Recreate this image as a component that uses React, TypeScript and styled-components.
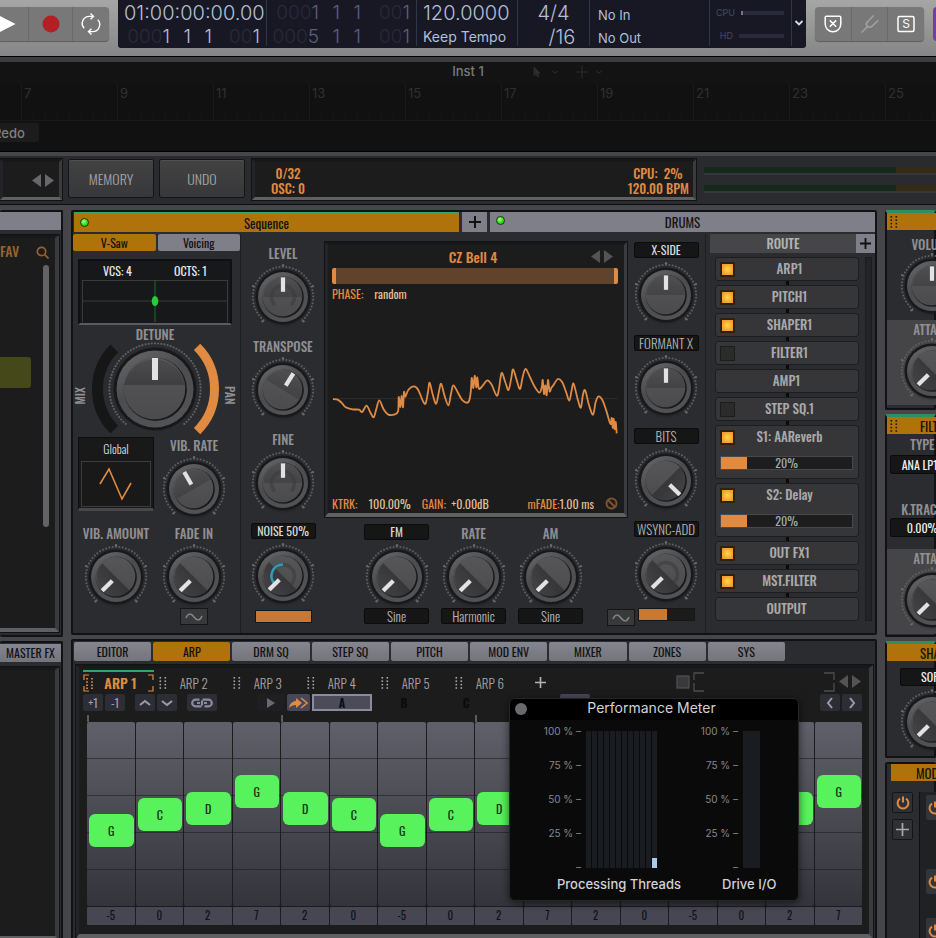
import React from 'react';
import styled, { createGlobalStyle, css } from 'styled-components';

/* ---------- tokens ---------- */

const cond = `Oswald, "Roboto Condensed", sans-serif`;
const ui = `Inter, Roboto, sans-serif`;
const orange = '#e08a42';
const amber = '#b0730b';
const lilac = '#7f7f89';

const Global = createGlobalStyle`
  * { box-sizing: border-box; }
  html, body { margin: 0; padding: 0; background: #45454a; }
  body { font-family: ${cond}; color: #a3a3a5; overflow: hidden; }
  button { font: inherit; color: inherit; border: 0; padding: 0; margin: 0; background: none; cursor: pointer; }
  svg { display: block; flex: none; }
`;

const Page = styled.div`
  position: relative;
  min-height: 100vh;
  display: flex;
  flex-direction: column;
  overflow: hidden;
`;

/* ---------- transport bar ---------- */

const TopBar = styled.header`
  display: flex;
  align-items: flex-start;
  height: 57px;
  overflow: hidden;
  background: linear-gradient(#a6a6a6, #868686);
  border-bottom: 1px solid #000;
`;

const ButtonGroup = styled.div<{ $left?: boolean }>`
  display: flex;
  flex: none;
  height: 34px;
  margin-top: 7px;
  background: #787878;
  border-radius: ${p => (p.$left ? '0 4px 4px 0' : '4px')};
  box-shadow: 0 1px 1px #5d5d5d;
  color: #fff;
`;

const GroupButton = styled.button<{ $w: number }>`
  display: flex;
  align-items: center;
  justify-content: center;
  width: ${p => p.$w}px;
  border-right: 1px solid #6a6a6a;
  &:last-child { border-right: 0; }
`;

const PlayButton = styled(GroupButton)`
  justify-content: flex-start;
`;

const PurpleButton = styled.button`
  flex: none;
  width: 40px;
  height: 34px;
  margin: 7px -37px 0 9px;
  background: #6e3db0;
  border-radius: 4px;
`;

const Lcd = styled.div`
  display: flex;
  flex: 1;
  height: 48px;
  margin: 0 9px;
  background: #181825;
  border-radius: 0 0 3px 3px;
  font-family: ${ui};
  color: #b4bfd8;
`;

const LcdCell = styled.div<{ $w?: number; $align?: string; $top?: number }>`
  ${p => (p.$w ? `width: ${p.$w}px; flex: none;` : 'flex: 1;')}
  display: flex;
  flex-direction: column;
  align-items: ${p => p.$align || 'stretch'};
  padding: ${p => p.$top || 1}px 6px 0;
  margin-bottom: 2px;
  border-right: 1px solid #30364a;
  &:last-child { border-right: 0; padding: 0; justify-content: center; align-items: center; }
`;

const Big = styled.div`
  font-size: 20px;
  font-weight: 300;
  line-height: 24px;
  white-space: nowrap;
`;

const Mid = styled.div`
  font-size: 14px;
  line-height: 24px;
  white-space: nowrap;
`;

const Small = styled.div`
  font-size: 13px;
  line-height: 23px;
  padding: 0 2px;
`;

const Position = styled.div<{ $dim?: boolean }>`
  display: grid;
  grid-template-columns: 46px 21px 21px 1fr;
  justify-items: end;
  font-size: 19px;
  font-weight: 300;
  line-height: 24px;
  color: ${p => (p.$dim ? '#5a6078' : '#b4bfd8')};
  i { font-style: normal; color: #282938; }
`;

const LoadRow = styled.div`
  display: flex;
  align-items: center;
  justify-content: flex-end;
  gap: 6px;
  padding-right: 1px;
  line-height: 23px;
  font-size: 9px;
  color: #454b5f;
`;

const LoadTrack = styled.span<{ $on?: boolean }>`
  width: 45px;
  height: 4px;
  background: #272a3c;
  border-left: 2px solid ${p => (p.$on ? '#6f7690' : '#272a3c')};
`;

/* ---------- dimmed plug-in window header ---------- */

const WindowHead = styled.div`
  display: grid;
  grid-template-columns: 1fr auto 1fr;
  align-items: start;
  height: 27px;
  background: #131313;
  border-top: 5px solid #3c3c3e;
  font: 500 13px/18px ${ui};
  color: #7b7b7d;
`;

const ToolIcons = styled.div`
  display: flex;
  gap: 16px;
  padding: 4px 0 0 47px;
`;

const Ruler = styled.div`
  display: flex;
  height: 37px;
  padding-left: 21px;
  background: #111;
  border-bottom: 1px solid #191919;
  overflow: hidden;
`;

const RulerMark = styled.span`
  flex: 0 0 96px;
  height: 100%;
  padding-left: 2px;
  border-left: 1px solid #1a1a1a;
  background: repeating-linear-gradient(90deg, transparent 0 11px, #151515 11px 12px) 0 24px / 100% 13px no-repeat;
  font: 400 13px/19px ${ui};
  color: #303031;
`;

const RedoStrip = styled.div`
  height: 31px;
  padding-top: 2px;
  background: #111;
  border-bottom: 1px solid #000;
`;

const RedoButton = styled.button`
  display: block;
  height: 19px;
  width: 51px;
  margin-left: -12px;
  padding-left: 5px;
  text-align: left;
  background: #1c1c1d;
  border-radius: 2px;
  font: 500 13px/18px ${ui};
  color: #808082;
`;

/* ---------- synth header ---------- */

const SynthHead = styled.div`
  display: flex;
  align-items: flex-start;
  height: 53px;
  padding-top: 3px;
  background: #2a2b2e;
  border-top: 4px solid #464648;
  border-bottom: 1px solid #0e0e10;
`;

const Screen = styled.div`
  background: #1c1c1d;
  border: 3px solid;
  border-color: #17181a #3b3b3e #606063 #232427;
  box-shadow: 0 0 0 1px #111214;
`;

const Slot = styled(Screen)`
  display: flex;
  align-items: center;
  justify-content: flex-end;
  width: 62px;
  height: 41px;
  padding: 3px 4px 0 0;
`;

const HeadButton = styled.button`
  width: 84px;
  height: 37px;
  margin: 1px 0 0 7px;
  background: linear-gradient(#424243, #38383a);
  box-shadow: 0 0 0 1px #141416, inset 0 1px 0 #505052;
  border-radius: 2px;
  font-size: 14px;
  font-weight: 300;
  line-height: 36px;
  color: #a5a5a7;
`;

const Info = styled(Screen)`
  flex: 1;
  display: flex;
  justify-content: space-between;
  height: 41px;
  margin: 0 8px;
  padding: 4px 4px 0 16px;
  font-size: 13px;
  font-weight: 500;
  line-height: 15px;
  color: ${orange};
  white-space: pre;
`;

const InfoLines = styled.div<{ $end?: boolean }>`
  display: flex;
  flex-direction: column;
  align-items: ${p => (p.$end ? 'flex-end' : 'center')};
`;

const Meters = styled.div`
  width: 232px;
  display: grid;
  gap: 10px;
  padding-top: 8px;
`;

const MeterBar = styled.div`
  height: 8px;
  background: linear-gradient(90deg, #14281c 0 192px, #352c18 192px);
  border-bottom: 2px solid #35373a;
`;

/* ---------- panels ---------- */

const Main = styled.main`
  flex: 1;
  display: grid;
  grid-template-columns: 63px minmax(0, 1fr) 51px;
  gap: 8px;
  background: #45454a;
  padding-top: 5px;
`;

const Column = styled.div`
  display: flex;
  flex-direction: column;
  gap: 4px;
  min-width: 0;
  overflow: hidden;
`;

const Panel = styled.section<{ $grow?: boolean }>`
  background: #2b2c2f;
  border: 2px solid #111216;
  border-radius: 2px;
  ${p => p.$grow && 'flex: 1;'}
`;

const LeftPanel = styled(Panel)`
  border-left: 0;
  display: flex;
  flex-direction: column;
`;

const LilacStrip = styled.div`
  height: 18px;
  margin-bottom: 5px;
  background: ${lilac};
`;

const BrowserScreen = styled(Screen)`
  flex: 1;
  display: flex;
  justify-content: space-between;
  border-left: 0;
  margin: 0 2px 3px 0;
  border-width: 3px 4px 4px 0;
`;

const Fav = styled.div`
  padding-top: 3px;
  font-size: 14px;
  font-weight: 500;
  line-height: 20px;
  color: #96602c;
`;

const Chip = styled.div`
  width: 31px;
  height: 31px;
  margin-top: 96px;
  background: #454919;
  border-radius: 0 3px 3px 0;
`;

const ScrollSide = styled.div`
  display: flex;
  flex-direction: column;
  align-items: flex-end;
  gap: 6px;
  padding: 8px 6px 101px 0;
`;

const Thumb = styled.div`
  width: 6px;
  height: 262px;
  background: #636365;
  border-radius: 3px;
`;

const MasterTab = styled.button`
  height: 18px;
  margin: 1px 0 5px;
  background: linear-gradient(#85858f, #74747d);
  font-size: 12px;
  line-height: 18px;
  color: #111;
  white-space: nowrap;
`;

/* ---------- oscillator ---------- */

const TabRow = styled.div`
  display: flex;
  gap: 3px;
  height: 22px;
  padding: 0 0 2px 1px;
`;

const OscTab = styled.button<{ $on?: boolean; $small?: boolean }>`
  position: relative;
  flex: ${p => (p.$small ? '0 0 25px' : '1')};
  display: flex;
  align-items: center;
  justify-content: center;
  background: ${p => (p.$on ? amber : lilac)};
  ${p => p.$on && 'border-top: 2px solid #34a36c;'}
  color: #111;
  font-size: 13px;
  line-height: 16px;
`;

const Led = styled.span`
  position: absolute;
  left: 6px;
  top: 4px;
  width: 9px;
  height: 9px;
  border-radius: 50%;
  background: radial-gradient(circle at 40% 35%, #a9ff7d, #26d80a 60%);
  border: 1px solid #123f0c;
`;

const OscBody = styled.div`
  display: grid;
  grid-template-columns: 168px 84px minmax(0, 1fr) 79px 169px;
  min-height: 399px;
`;

const Section = styled.div<{ $line?: boolean; $pad?: number }>`
  display: flex;
  flex-direction: column;
  align-items: center;
  min-width: 0;
  padding-top: ${p => p.$pad || 0}px;
  ${p => p.$line && 'border-right: 1px solid #1d1e20;'}
`;

const VoiceSection = styled(Section)`
  padding-right: 3px;
`;

const SubTabs = styled.div`
  display: flex;
  gap: 2px;
  align-self: stretch;
  margin-right: -3px;
`;

const SubTab = styled.button<{ $on?: boolean }>`
  flex: 1;
  height: 17px;
  background: ${p => (p.$on ? amber : lilac)};
  border-radius: 2px;
  color: #111;
  font-size: 12px;
  line-height: 16px;
`;

const VoiceScreen = styled.div`
  width: 154px;
  height: 66px;
  margin-top: 8px;
  padding: 0 2px;
  background: #171819;
  border: 2px solid #0f1011;
  border-bottom-color: #5b5b5e;
  border-radius: 2px;
`;

const VoiceText = styled.div`
  display: flex;
  justify-content: space-around;
  font-size: 12px;
  line-height: 19px;
  color: #e8e8ea;
`;

const Label = styled.div<{ $h?: number }>`
  height: ${p => p.$h || 20}px;
  font-size: 13px;
  font-weight: 500;
  line-height: 18px;
  color: #8f8f92;
  white-space: nowrap;
`;

const BoxButton = styled.button<{ $dim?: boolean }>`
  width: 65px;
  height: 16px;
  background: #161617;
  border: 1px solid #0b0b0c;
  border-radius: 2px;
  font-size: ${p => (p.$dim ? 13 : 12)}px;
  font-weight: ${p => (p.$dim ? 300 : 400)};
  line-height: 14px;
  color: ${p => (p.$dim ? '#b6b6b9' : '#d8d8da')};
  white-space: nowrap;
`;

const Cell = styled.div<{ $w?: number }>`
  display: flex;
  flex-direction: column;
  align-items: center;
  width: ${p => p.$w || 78}px;
  ${BoxButton}:first-child { margin-bottom: 4px; }
  ${BoxButton}:last-child { margin-bottom: 2px; }
`;

const Stack = styled.div<{ $gap: number }>`
  display: flex;
  flex-direction: column;
  gap: ${p => p.$gap}px;
`;

const BigKnobRow = styled.div`
  display: flex;
  align-items: center;
  justify-content: center;
  gap: 2px;
  height: 95px;
`;

const Side = styled.span<{ $flip?: boolean }>`
  writing-mode: vertical-rl;
  ${p => p.$flip && 'rotate: 180deg;'}
  font-size: 12px;
  font-weight: 500;
  line-height: 14px;
  color: #8f8f92;
  padding-top: ${p => (p.$flip ? 0 : 14)}px;
  padding-bottom: ${p => (p.$flip ? 14 : 0)}px;
`;

const TwoUp = styled.div`
  display: flex;
  align-items: flex-start;
`;

const GlobalBox = styled.button`
  width: 76px;
  height: 74px;
  margin: 1px 1px 13px;
  padding: 0 2px;
  background: #19191a;
  border: 1px solid #0d0d0e;
  border-bottom: 3px solid #48484b;
  font-size: 12px;
  font-weight: 300;
  line-height: 20px;
  color: #d8d8da;
  svg { border: 1px solid #3d3d40; width: 100%; margin-top: 2px; }
`;

const WaveToggle = styled.button`
  display: grid;
  place-items: center;
  width: 28px;
  height: 17px;
  background: #38393b;
  border: 1px solid #161618;
`;

const Fill = styled.div<{ $pct: number }>`
  width: 57px;
  height: 13px;
  margin-top: 3px;
  border: 1px solid #161618;
  background: linear-gradient(90deg, #c87833 ${p => p.$pct}%, #1b1b1c ${p => p.$pct}%);
`;

const Display = styled(Screen)`
  align-self: stretch;
  height: 275px;
  padding: 0 6px 0 4px;
  display: flex;
  flex-direction: column;
  border-width: 3px 3px 4px 3px;
`;

const DisplayTitle = styled.div`
  display: grid;
  grid-template-columns: 1fr auto 1fr;
  align-items: center;
  justify-items: end;
  padding-right: 4px;
  height: 24px;
  font-size: 14px;
  font-weight: 500;
  color: ${orange};
`;

const RangeBar = styled.div`
  height: 16px;
  background: #61432b;
  border: solid ${orange};
  border-width: 0 4px;
  border-radius: 2px;
`;

const Params = styled.div`
  display: flex;
  align-items: center;
  font-size: 12px;
  line-height: 19px;
  color: #e6bd93;
  white-space: pre;
  b { font-weight: 400; color: ${orange}; }
`;

const Spacer = styled.span`
  flex: 1;
`;

const Gap = styled.span`
  width: 11px;
`;

const FmRow = styled.div`
  display: flex;
  align-self: stretch;
  align-items: flex-end;
  padding-left: 33px;
  margin-top: 7px;
`;

const FmToggle = styled.div`
  flex: 1;
  display: flex;
  justify-content: flex-end;
  margin-right: -8px;
`;

/* ---------- route ---------- */

const Route = styled.div`
  padding-left: 4px;
`;

const RouteHead = styled.div`
  display: flex;
  height: 19px;
  background: #464648;
  font-size: 13px;
  font-weight: 500;
  line-height: 18px;
  color: #b2b2b4;
  & > span { flex: 1; text-align: center; }
  & > button { width: 19px; background: ${lilac}; color: #111; display: grid; place-items: center; }
`;

const RouteBody = styled.div`
  display: flex;
  justify-content: space-between;
  padding: 4px 3px 0 5px;
`;

const RouteList = styled.div`
  flex: 1;
  margin-right: 6px;
  display: grid;
  gap: 4px;
  background: linear-gradient(90deg, transparent 0 71px, #0a0a0b 71px 74px, transparent 74px);
`;

const RouteTrack = styled.div`
  width: 7px;
  background: #232425;
  border: 1px solid #1b1c1d;
`;

const RouteItem = styled.div<{ $tall?: boolean }>`
  height: ${p => (p.$tall ? 54 : 24)}px;
  background: #363638;
  border: 1px solid #1c1d1f;
  border-radius: 3px;
  padding: 0 5px 0 4px;
`;

const RouteLabel = styled.label`
  display: flex;
  align-items: center;
  height: 22px;
  font-size: 13px;
  font-weight: 500;
  line-height: 18px;
  color: #a9a9ab;
  span { flex: 1; text-align: center; padding-bottom: 2px; }
`;

const Tick = styled.input`
  appearance: none;
  flex: none;
  width: 15px;
  height: 15px;
  margin: 0 -9px 0 0;
  border: 1px solid #1c1c1d;
  background: #2b2b2c;
  &:checked { border: 2px solid #2a2217; background: radial-gradient(#ffd54a, #f09a2c 80%); }
`;

const Amount = styled.div<{ $pct: number }>`
  height: 14px;
  margin-top: 8px;
  border: 1px solid #48484a;
  background: linear-gradient(90deg, ${orange} ${p => p.$pct}%, #1d1d1e ${p => p.$pct}%);
  text-align: center;
  font-size: 12px;
  line-height: 12px;
  color: #a9a9ab;
`;

/* ---------- sequencer ---------- */

const SeqPanel = styled(Panel)`
  padding: 1px 1px 0;
  flex: 1;
`;

const PageTabs = styled.div`
  display: flex;
  gap: 2px;
  margin-right: 89px;
`;

const PageTab = styled.button<{ $on?: boolean }>`
  flex: 1;
  height: 19px;
  background: ${p => (p.$on ? amber : 'linear-gradient(#85858f, #74747d)')};
  border-radius: 2px;
  color: #111;
  font-size: 12px;
  line-height: 18px;
`;

const SeqScreen = styled(Screen)`
  margin: 4px 1px 3px 2px;
  padding: 2px 7px 9px 4px;
  border-width: 3px 4px 5px 3px;
`;

const ArpTabs = styled.div`
  display: flex;
  align-items: stretch;
  height: 24px;
`;

const ArpTab = styled.button<{ $on?: boolean }>`
  display: flex;
  align-items: center;
  gap: 10px;
  width: 74px;
  font-size: ${p => (p.$on ? 14 : 13)}px;
  font-weight: ${p => (p.$on ? 600 : 300)};
  line-height: 20px;
  color: ${p => (p.$on ? orange : '#a6a6a8')};
  border-top: 2px solid ${p => (p.$on ? '#34a36c' : 'transparent')};
  padding-left: ${p => (p.$on ? 0 : 4)}px;
  ${p => p.$on && 'width: 71px; margin-right: 1px; justify-content: space-between; gap: 0;'}
`;

const PlusTab = styled.button`
  width: 30px;
  display: grid;
  place-items: center;
  color: #b2b2b4;
`;

const RightTools = styled.div`
  flex: 1;
  display: flex;
  justify-content: flex-end;
  align-items: center;
  gap: 3px;
`;

const BracketGap = styled.span`
  flex: 0 0 114px;
`;

const ToolRow = styled.div`
  display: flex;
  gap: 2px;
  height: 17px;
`;

const Tool = styled.button<{ $w?: number; $ml?: number; $bg?: string }>`
  display: grid;
  place-items: center;
  width: ${p => p.$w || 20}px;
  margin-left: ${p => p.$ml || 0}px;
  background: ${p => p.$bg || '#2d2d35'};
  border-radius: 2px;
  font-size: 12px;
  line-height: 14px;
  color: #9c9cae;
`;

const Pattern = styled.button<{ $on?: boolean }>`
  width: 60px;
  font-size: 12px;
  font-weight: 600;
  line-height: 13px;
  color: ${p => (p.$on ? '#0d0d18' : '#0a0a0a')};
  ${p => p.$on && css`background: #4b4b5a; border: 2px solid #8b8b9c;`}
`;

const Bars = styled.div`
  display: grid;
  grid-template-columns: repeat(4, 1fr);
  height: 7px;
  margin: 4px 0 0 4px;
  span { border-left: 2px solid #5b5b60; }
`;

const Steps = styled.div`
  display: grid;
  grid-template-columns: repeat(16, minmax(0, 1fr));
  column-gap: 1px;
  margin-left: 4px;
`;

const Lane = styled.div`
  display: flex;
  align-items: flex-start;
  height: 184px;
  padding: 0 1px 0 2px;
  border-radius: 2px;
  background:
    repeating-linear-gradient(transparent 0 36px, rgba(20, 20, 28, 0.5) 36px 37px),
    linear-gradient(#60606a, #34343c);
`;

const Note = styled.button`
  flex: 1;
  height: 33px;
  background: #57f25c;
  border-radius: 6px;
  font-size: 12px;
  line-height: 30px;
  color: #10300f;
`;

const StepValue = styled.div`
  height: 18px;
  margin-top: 1px;
  background: #474753;
  border-radius: 1px;
  text-align: center;
  font-size: 11px;
  line-height: 17px;
  color: #101018;
`;

/* ---------- right modules ---------- */

const Module = styled(Panel)<{ $top?: boolean; $h: number }>`
  min-height: ${p => p.$h}px;
  ${p => p.$top && 'border-top: 3px solid #2f8f60;'}
`;

const ModTitle = styled.div<{ $ml?: number; $gap?: number }>`
  display: flex;
  align-items: center;
  gap: ${p => p.$gap || 22}px;
  width: 110px;
  height: 17px;
  margin-left: ${p => p.$ml || 0}px;
  padding-left: 3px;
  background: ${amber};
  font-size: 13px;
  line-height: 16px;
  color: #151108;
`;

const ModCol = styled.div<{ $pad: number; $lit?: boolean }>`
  display: flex;
  flex-direction: column;
  align-items: center;
  width: 90px;
  padding: ${p => p.$pad}px 0 3px;
  ${p => p.$lit && 'background: #454547;'}
  ${BoxButton} { height: 18px; line-height: 16px; margin-bottom: 3px; color: #f0f0f2; }
`;

const ModField = styled.div<{ $below: number }>`
  width: 68px;
  padding: 1px 0 ${p => p.$below}px 3px;
  text-align: center;
  ${BoxButton} { display: block; height: 19px; color: #f0f0f2; }
`;

const ModBody = styled.div`
  display: flex;
  gap: 6px;
  padding: 11px 0 0 5px;
`;

const SquareButton = styled.button`
  display: grid;
  place-items: center;
  width: 21px;
  height: 21px;
  background: #2f3032;
  border: 1px solid #151517;
  border-radius: 2px;
  color: #a8a8aa;
`;

const ModList = styled.div`
  display: grid;
  align-content: start;
  gap: 24px;
  width: 60px;
  padding: 3px 0 0 6px;
  background: #202123;
  border-left: 1px solid #0f0f10;
  ${SquareButton} { width: 40px; height: 25px; padding-left: 2px; justify-items: start; background: #343538; border: 0; }
  ${SquareButton}:first-child { margin-bottom: 25px; }
`;

/* ---------- performance meter ---------- */

const Perf = styled.aside`
  position: absolute;
  left: 509px;
  top: 698px;
  width: 290px;
  background: #0a0a0b;
  border: 1px solid #262628;
  border-radius: 6px;
  overflow: hidden;
  font-family: ${ui};
  color: #d2d2d4;
  box-shadow: 0 2px 8px rgba(0, 0, 0, 0.6);
`;

const PerfHead = styled.div`
  display: grid;
  grid-template-columns: 20px 1fr 30px;
  height: 21px;
  padding-left: 5px;
  background: #000;
  font-size: 14px;
  line-height: 18px;
  text-align: center;
`;

const CloseDot = styled.button`
  width: 12px;
  height: 12px;
  margin-top: 4px;
  border-radius: 50%;
  background: #6a6a6c;
`;

const PerfBody = styled.div`
  display: flex;
  padding: 6px 0 6px;
`;

const PerfCol = styled.div<{ $w: number; $pad: number }>`
  width: ${p => p.$w}px;
  padding-left: ${p => p.$pad}px;
`;

const Chart = styled.div`
  display: flex;
  gap: 5px;
`;

const Scale = styled.div`
  width: 41px;
  height: 146px;
  display: flex;
  flex-direction: column;
  justify-content: space-between;
  font-size: 10px;
  line-height: 10px;
  text-align: right;
  color: #88888a;
  white-space: nowrap;
`;

const Threads = styled.div`
  display: flex;
  gap: 1px;
  height: 137px;
  margin-top: 5px;
`;

const Thread = styled.span<{ $w: number; $load?: boolean }>`
  width: ${p => p.$w}px;
  background: ${p => (p.$load ? 'linear-gradient(#191c20 127px, #a9c8ea 127px)' : '#191c20')};
`;

const PerfLabel = styled.div<{ $ml: number }>`
  margin: 2px 0 0 ${p => p.$ml}px;
  font-size: 13px;
  font-weight: 500;
  line-height: 20px;
  white-space: nowrap;
`;

/* ---------- drawings ---------- */

const pt = (r: number, deg: number, c: number) => {
  const a = ((deg - 90) * Math.PI) / 180;
  return [c + r * Math.cos(a), c + r * Math.sin(a)];
};

const arcPath = (r: number, from: number, to: number, c: number) => {
  const [x1, y1] = pt(r, from, c);
  const [x2, y2] = pt(r, to, c);
  return `M${x1} ${y1}A${r} ${r} 0 ${Math.abs(to - from) > 180 ? 1 : 0} 1 ${x2} ${y2}`;
};

const KnobDefs = () => (
  <svg width="0" height="0" aria-hidden="true">
    <defs>
      <linearGradient id="rim" x1="0" y1="0" x2="0.6" y2="1">
        <stop offset="0" stopColor="#6a6a6c" />
        <stop offset="0.5" stopColor="#4c4c4e" />
        <stop offset="1" stopColor="#535355" />
      </linearGradient>
      <linearGradient id="face" x1="0" y1="0" x2="0" y2="1">
        <stop offset="0" stopColor="#565658" />
        <stop offset="1" stopColor="#4b4b4d" />
      </linearGradient>
      <linearGradient id="half" x1="0" y1="0" x2="0" y2="1">
        <stop offset="0" stopColor="#1d1d1e" stopOpacity="0.25" />
        <stop offset="1" stopColor="#1d1d1e" stopOpacity="0.5" />
      </linearGradient>
      <linearGradient id="lip" x1="0" y1="0" x2="1" y2="0.6">
        <stop offset="0" stopColor="#3a3a3c" />
        <stop offset="1" stopColor="#161617" />
      </linearGradient>
      <radialGradient id="shade">
        <stop offset="0.7" stopColor="#0c0c0d" stopOpacity="0.9" />
        <stop offset="1" stopColor="#0c0c0d" stopOpacity="0" />
      </radialGradient>
    </defs>
  </svg>
);

type KnobProps = { name: string; angle: number; ghost?: boolean; arc?: boolean };

const dotAngles = Array.from({ length: 45 }, (_, i) => -140 + (280 / 44) * i);

const Knob = ({ name, angle, ghost, arc }: KnobProps) => (
  <svg width="66" height="64" viewBox="0 0 66 64" role="slider" aria-label={name} aria-valuenow={angle}>
    <circle cx="33" cy="36" r="28" fill="url(#shade)" opacity="0.5" />
    {dotAngles.map(a => {
      const [x, y] = pt(30.2, a, 33);
      return <circle key={a} cx={x} cy={y} r="1" fill="#606064" />;
    })}
    {[-140, -70, 0, 70, 140].map(a => {
      const [x, y] = pt(31.8, a, 33);
      return <circle key={a} cx={x} cy={y} r="1.2" fill="#6a6a6e" />;
    })}
    <circle cx="33" cy="33" r="27.6" fill="#18191a" />
    <circle cx="33" cy="33" r="25" fill="url(#rim)" />
    <circle cx="33.200" cy="33.200" r="20.6" fill="url(#lip)" />
    <circle cx="32.500" cy="32.500" r="19.800" fill="url(#face)" />
    <g transform={`rotate(${angle} 33 33)`} opacity={Math.abs(angle) > 90 ? 1 : 0.5}>
      <path d="M13.500 33a19.500 19.500 0 0 1 39 0z" fill="url(#half)" />
    </g>
    {ghost && <path d={arcPath(11.5, -135, 135, 33)} fill="none" stroke="#3c3c3e" strokeWidth="3.4" opacity="0.6" />}
    {arc && <path d={arcPath(11.5, -135, 0, 33)} fill="none" stroke="#2f9bb5" strokeWidth="2.6" />}
    <rect x="30.9" y="13.4" width="4.2" height="14.4" fill="#e2e2e2" transform={`rotate(${angle} 33 33)`} />
  </svg>
);

const BigKnob = () => (
  <svg width="132" height="96" viewBox="0 0 132 96" role="slider" aria-label="Detune" aria-valuenow={0}>
    <g transform="translate(66 48)">
      <path d={arcPath(57.5, 225, 315, 0)} fill="none" stroke="#161617" strokeWidth="11" />
      <path d={arcPath(59.5, 45, 135, 0)} fill="none" stroke={orange} strokeWidth="9" />
      {Array.from({ length: 71 }, (_, i) => -140 + 4 * i).map(a => {
        const [x, y] = pt(45.6, a, 0);
        return <circle key={a} cx={x} cy={y} r="1.1" fill="#606064" />;
      })}
      <circle r="41.500" fill="#17181a" />
      <circle r="38.500" fill="url(#rim)" />
      <circle r="31.600" cx="0.300" cy="0.300" fill="url(#lip)" />
      <circle r="30.800" cx="-0.500" cy="-0.500" fill="url(#face)" />
      <path d="M-31-4a31 31 0 0 1 61 0z" fill="url(#half)" opacity="0.7" />
      <rect x="-3" y="-31" width="6" height="22" fill="#e2e2e2" />
    </g>
  </svg>
);

const Arrows = ({ c = '#68686b' }: { c?: string }) => (
  <svg width="24" height="14" viewBox="0 0 24 14" fill={c} aria-hidden="true">
    <path d="M10 0v13L1 6.5zM14 0v13l9-6.5z" />
  </svg>
);

const Plus = ({ s = 12, w = 2 }: { s?: number; w?: number }) => (
  <svg width={s} height={s} viewBox="0 0 12 12" stroke="currentColor" strokeWidth={w} aria-hidden="true">
    <path d="M6 0v12M0 6h12" />
  </svg>
);

const Grip = ({ c }: { c: string }) => (
  <svg width="8" height="12" viewBox="0 0 8 12" fill={c} aria-hidden="true">
    {[0, 5].map(x => [0, 3.4, 6.8, 10.2].map(y => <rect key={`${x}-${y}`} x={x + 0.5} y={y} width="1.6" height="1.6" />))}
  </svg>
);

const Sine = () => (
  <svg width="18" height="8" viewBox="0 0 18 8" fill="none" stroke="#85858a" strokeWidth="1.5" aria-hidden="true">
    <path d="M1 5C3 0 6 0 9 4s6 4 8-1" />
  </svg>
);

const Power = () => (
  <svg width="14" height="14" viewBox="0 0 14 14" fill="none" stroke={orange} strokeWidth="2" aria-hidden="true">
    <path d="M4 2.6A5.4 5.4 0 1 0 10 2.6M7 0.5v6" />
  </svg>
);

const Chevron = ({ d, s = 12 }: { d: string; s?: number }) => (
  <svg width={s} height={s} viewBox="0 0 12 12" fill="none" stroke="currentColor" strokeWidth="2" aria-hidden="true">
    <path d={d} />
  </svg>
);

const wavePoints: [number, number][] = [
  [36, 581], [50, 583], [62, 592], [75, 606], [95, 612], [115, 613], [125, 620], [138, 601], [150, 622], [160, 636],
  [168, 610], [177, 585], [190, 612], [203, 627], [222, 628], [234, 618], [236, 575], [241, 605], [245, 572], [249, 606],
  [252, 560], [256, 574], [265, 554], [282, 543], [295, 553], [310, 588], [318, 594], [325, 560], [330, 532], [340, 570],
  [350, 595], [358, 560], [365, 535], [375, 570], [387, 600], [395, 565], [402, 540], [415, 560], [430, 585], [448, 590],
  [455, 560], [458, 518], [463, 548], [467, 511], [472, 546], [475, 516], [480, 550], [492, 540], [505, 525], [518, 537],
  [534, 571], [541, 550], [549, 503], [560, 530], [570, 554], [578, 520], [584, 492], [595, 525], [605, 551], [613, 515],
  [622, 491], [635, 515], [650, 545], [664, 562], [671, 546], [674, 524], [678, 566], [682, 540], [686, 570], [690, 524],
  [695, 558], [700, 548], [706, 540], [720, 521], [733, 530], [745, 560], [755, 586], [762, 555], [768, 535], [780, 580],
  [790, 607], [796, 570], [803, 555], [815, 600], [827, 628], [835, 590], [844, 573], [856, 585], [868, 618], [880, 656],
  [884, 638], [887, 668], [890, 640], [893, 672], [896, 650], [899, 684],
];

const wavePath = wavePoints.reduce((d, p, i, a) => {
  if (i === 0) return `M${p[0]} ${p[1]}`;
  const p0 = a[i - 2] || a[i - 1];
  const p1 = a[i - 1];
  const p3 = a[i + 1] || p;
  const c1 = [p1[0] + (p[0] - p0[0]) / 6, p1[1] + (p[1] - p0[1]) / 6];
  const c2 = [p[0] - (p3[0] - p1[0]) / 6, p[1] - (p3[1] - p1[1]) / 6];
  return `${d}C${c1[0]} ${c1[1]} ${c2[0]} ${c2[1]} ${p[0]} ${p[1]}`;
}, '');

/* ---------- data ---------- */

const routes = [
  { name: 'ARP1', on: true },
  { name: 'PITCH1', on: true },
  { name: 'SHAPER1', on: true },
  { name: 'FILTER1', on: false },
  { name: 'AMP1' },
  { name: 'STEP SQ.1', on: false },
  { name: 'S1: AAReverb', on: true, amount: 20 },
  { name: 'S2: Delay', on: true, amount: 20 },
  { name: 'OUT FX1', on: true },
  { name: 'MST.FILTER', on: true },
  { name: 'OUTPUT' },
];

const steps = [-5, 0, 2, 7, 2, 0, -5, 0, 2, 7, 2, 0, -5, 0, 2, 7];
const noteNames: Record<string, string> = { '-5': 'G', '0': 'C', '2': 'D', '7': 'G' };
const noteTop = (v: number) => Math.round(76 - v * 3.25);
const pages = ['EDITOR', 'ARP', 'DRM SQ', 'STEP SQ', 'PITCH', 'MOD ENV', 'MIXER', 'ZONES', 'SYS'];
const percents = ['100 % –', '75 % –', '50 % –', '25 % –', '–'];

/* ---------- parts ---------- */

const Transport = () => (
  <TopBar>
    <ButtonGroup $left>
      <PlayButton $w={29} aria-label="Play">
        <svg width="16" height="18" viewBox="0 0 16 18" fill="#fff"><path d="M0 1l15.500 8L0 17z" /></svg>
      </PlayButton>
      <GroupButton $w={44} aria-label="Record">
        <svg width="18" height="18" viewBox="0 0 18 18"><circle cx="9" cy="9" r="8.500" fill="#b31f24" /></svg>
      </GroupButton>
      <GroupButton $w={36} aria-label="Cycle">
        <svg width="22" height="22" viewBox="0 0 22 22" fill="none" stroke="#fff" strokeWidth="1.400">
          <path d="M13 3.400H9.500a7 7 0 0 0-5.300 11.800M9 18.600h3.500a7 7 0 0 0 5.300-11.800" />
          <path d="M10.500 0.600l3 2.800-3 2.800M11.500 15.800l-3 2.800 3 2.800" />
        </svg>
      </GroupButton>
    </ButtonGroup>
    <Lcd>
      <LcdCell $w={149}>
        <Big>01:00:00:00.00</Big>
        <Position><span><i>000</i>1</span><span>1</span><span>1</span><span><i>00</i>1</span></Position>
      </LcdCell>
      <LcdCell $w={150}>
        <Position $dim><span><i>000</i>1</span><span>1</span><span>1</span><span><i>00</i>1</span></Position>
        <Position $dim><span><i>000</i>5</span><span>1</span><span>1</span><span><i>00</i>1</span></Position>
      </LcdCell>
      <LcdCell $w={101}><Big>120.0000</Big><Mid>Keep Tempo</Mid></LcdCell>
      <LcdCell $w={72} $align="center"><Big>4/4</Big><Big>&nbsp;&nbsp;&nbsp;/16</Big></LcdCell>
      <LcdCell $top={4}>
        <Small>No In</Small><Small>No Out</Small>
      </LcdCell>
      <LcdCell $w={82}>
        <LoadRow>CPU<LoadTrack $on /></LoadRow>
        <LoadRow>HD<LoadTrack /></LoadRow>
      </LcdCell>
      <LcdCell $w={14}>
        <svg width="10" height="8" viewBox="0 0 10 8" fill="none" stroke="#d5dbea" strokeWidth="1.800"><path d="M1.500 2l3.500 3.500L8.500 2" /></svg>
      </LcdCell>
    </Lcd>
    <ButtonGroup>
      <GroupButton $w={37} aria-label="Replace">
        <svg width="18" height="18" viewBox="0 0 18 18" fill="none" stroke="#fff" strokeWidth="1.500">
          <path d="M2.500 1.200h13a1.300 1.300 0 0 1 1.300 1.300V9a7.800 7.800 0 0 1-15.600 0V2.500a1.300 1.300 0 0 1 1.300-1.300zM5.800 5.400l6.400 6.400M12.200 5.400l-6.400 6.400" />
        </svg>
      </GroupButton>
      <GroupButton $w={36} aria-label="Tuner">
        <svg width="20" height="20" viewBox="0 0 20 20" fill="none" stroke="#a2a2a2" strokeWidth="1.500">
          <path d="M1.500 18.500l6-6M13.500 1.500L7.400 8a3 3 0 0 0 4.400 4.400l6.600-6.200" />
        </svg>
      </GroupButton>
      <GroupButton $w={36} aria-label="Solo">
        <svg width="18" height="18" viewBox="0 0 18 18" fill="none" stroke="#fff" strokeWidth="1.500">
          <rect x="1" y="1.500" width="16" height="15" rx="1.500" />
          <text x="9" y="13.300" textAnchor="middle" fontFamily="Inter, sans-serif" fontSize="12" fill="#fff" stroke="none">S</text>
        </svg>
      </GroupButton>
    </ButtonGroup>
    <PurpleButton aria-label="Count in" />
  </TopBar>
);

const LeftColumn = () => (
  <Column>
    <LeftPanel>
      <LilacStrip />
      <BrowserScreen>
        <div>
          <Fav>FAV</Fav>
          <Chip />
        </div>
        <ScrollSide>
          <svg width="13" height="13" viewBox="0 0 13 13" fill="none" stroke="#96602c" strokeWidth="1.700" aria-label="Search">
            <circle cx="5.500" cy="5.500" r="4.200" /><path d="M8.500 8.500l4 4" />
          </svg>
          <Thumb />
        </ScrollSide>
      </BrowserScreen>
    </LeftPanel>
    <LeftPanel $grow>
      <MasterTab>MASTER FX</MasterTab>
      <BrowserScreen />
    </LeftPanel>
  </Column>
);

const Oscillator = () => (
  <Panel>
    <TabRow>
      <OscTab $on><Led />Sequence</OscTab>
      <OscTab $small aria-label="Add"><Plus /></OscTab>
      <OscTab><Led />DRUMS</OscTab>
    </TabRow>
    <OscBody>
      <VoiceSection $line>
        <SubTabs><SubTab $on>V-Saw</SubTab><SubTab>Voicing</SubTab></SubTabs>
        <VoiceScreen>
          <VoiceText><span>VCS: 4</span><span>OCTS: 1</span></VoiceText>
          <svg width="100%" height="42" viewBox="0 0 145 41" preserveAspectRatio="none">
            <path d="M0 0.500H145M0 20.500H145M0.500 0V41M144.500 0V41" stroke="#3b3b3e" fill="none" />
            <path d="M72.500 0V41" stroke="#1f6a2c" />
            <ellipse cx="72.500" cy="20.500" rx="3.300" ry="5" fill="#2bc93b" />
          </svg>
        </VoiceScreen>
        <Label $h={16}>DETUNE</Label>
        <BigKnobRow><Side $flip>MIX</Side><BigKnob /><Side>PAN</Side></BigKnobRow>
        <TwoUp>
          <GlobalBox>
            Global
            <svg height="46" viewBox="0 0 68 44" fill="none" stroke={orange} strokeWidth="1.600">
              <path d="M18 22l9-15 13 30 9-16" />
            </svg>
          </GlobalBox>
          <Cell><Label>VIB. RATE</Label><Knob name="Vib. rate" angle={-30} /></Cell>
        </TwoUp>
        <TwoUp>
          <Cell><Label>VIB. AMOUNT</Label><Knob name="Vib. amount" angle={-135} /></Cell>
          <Cell><Label>FADE IN</Label><Knob name="Fade in" angle={-135} /><WaveToggle aria-label="Fade curve"><Sine /></WaveToggle></Cell>
        </TwoUp>
      </VoiceSection>
      <Section $pad={10}>
        <Stack $gap={9}>
          <Cell><Label>LEVEL</Label><Knob name="Level" angle={0} ghost /></Cell>
          <Cell><Label>TRANSPOSE</Label><Knob name="Transpose" angle={32} /></Cell>
          <Cell><Label>FINE</Label><Knob name="Fine" angle={0} ghost /></Cell>
          <Cell><BoxButton>NOISE 50%</BoxButton><Knob name="Noise" angle={-135} ghost arc /><Fill $pct={100} /></Cell>
        </Stack>
      </Section>
      <Section $pad={8}>
        <Display>
          <DisplayTitle><span /><span>CZ Bell 4</span><Arrows c="#545457" /></DisplayTitle>
          <RangeBar />
          <Params><b>PHASE:   </b> random</Params>
          <svg width="100%" height="191" viewBox="33 293 870 573" preserveAspectRatio="none">
            <path d="M36 580H900" stroke="#2f2f31" strokeWidth="3" />
            <path d={wavePath} fill="none" stroke={orange} strokeWidth="5.500" strokeLinejoin="round" />
          </svg>
          <Params>
            <b>KTRK:</b><Gap />100.00%<Gap /><b>GAIN:</b>  +0.00dB<Spacer /><b>mFADE:</b>1.00 ms
            <Gap />
            <svg width="13" height="13" viewBox="0 0 13 13" fill="none" stroke="#80522b" strokeWidth="2" aria-label="Off">
              <circle cx="6.500" cy="6.500" r="5" /><path d="M3 3l7 7" />
            </svg>
          </Params>
        </Display>
        <FmRow>
          <Cell $w={77}><BoxButton>FM</BoxButton><Knob name="FM" angle={-135} /><BoxButton $dim>Sine</BoxButton></Cell>
          <Cell $w={77}><Label>RATE</Label><Knob name="Rate" angle={-135} /><BoxButton $dim>Harmonic</BoxButton></Cell>
          <Cell $w={77}><Label>AM</Label><Knob name="AM" angle={-135} /><BoxButton $dim>Sine</BoxButton></Cell>
          <FmToggle><WaveToggle aria-label="Sync curve"><Sine /></WaveToggle></FmToggle>
        </FmRow>
      </Section>
      <Section $pad={8} $line>
        <Stack $gap={9}>
          <Cell><BoxButton>X-SIDE</BoxButton><Knob name="X-side" angle={0} /></Cell>
          <Cell><BoxButton $dim>FORMANT X</BoxButton><Knob name="Formant X" angle={0} /></Cell>
          <Cell><BoxButton $dim>BITS</BoxButton><Knob name="Bits" angle={135} /></Cell>
          <Cell><BoxButton $dim>WSYNC-ADD</BoxButton><Knob name="Wsync" angle={-135} ghost /><Fill $pct={50} /></Cell>
        </Stack>
      </Section>
      <Route>
        <RouteHead><span>ROUTE</span><button aria-label="Add route"><Plus s={11} /></button></RouteHead>
        <RouteBody>
          <RouteList>
            {routes.map(r => (
              <RouteItem key={r.name} $tall={!!r.amount}>
                <RouteLabel>
                  {r.on !== undefined && <Tick type="checkbox" defaultChecked={r.on} />}
                  <span>{r.name}</span>
                </RouteLabel>
                {r.amount && <Amount $pct={r.amount}>{r.amount}%</Amount>}
              </RouteItem>
            ))}
          </RouteList>
          <RouteTrack />
        </RouteBody>
      </Route>
    </OscBody>
  </Panel>
);

const Sequencer = () => (
  <SeqPanel>
    <PageTabs>{pages.map(p => <PageTab key={p} $on={p === 'ARP'}>{p}</PageTab>)}</PageTabs>
    <SeqScreen>
      <ArpTabs>
        <ArpTab $on>
          <svg width="11" height="18" viewBox="0 0 11 18" fill="none" stroke={orange} strokeWidth="1.200">
            <path d="M6 1H1v5M1 12v5h5" /><path d="M4 4v11M9 4v11" strokeDasharray="1.600 1.600" strokeWidth="1.800" />
          </svg>
          ARP 1
          <svg width="7" height="18" viewBox="0 0 7 18" fill="none" stroke={orange} strokeWidth="1.200">
            <path d="M1 1h5v5M6 12v5H1" />
          </svg>
        </ArpTab>
        {[2, 3, 4, 5, 6].map(n => <ArpTab key={n}><Grip c="#a6a6a8" />&nbsp;ARP {n}</ArpTab>)}
        <PlusTab aria-label="Add arp"><Plus s={11} w={1.8} /></PlusTab>
        <RightTools>
          <svg width="28" height="20" viewBox="0 0 28 20" fill="none" stroke="#4d4d50" strokeWidth="1.300">
            <rect x="1" y="4" width="12" height="12" fill="#39393b" /><path d="M28 1H18v7M18 11v8h10" />
          </svg>
          <BracketGap />
          <svg width="11" height="20" viewBox="0 0 11 20" fill="none" stroke="#4d4d50" strokeWidth="1.300">
            <path d="M0 1h10v7M10 11v8H0" />
          </svg>
          <Arrows c="#545457" />
        </RightTools>
      </ArpTabs>
      <ToolRow>
        <Tool>+1</Tool>
        <Tool>-1</Tool>
        <Tool $ml={8} aria-label="Up"><Chevron d="M1 8l5-4 5 4" /></Tool>
        <Tool aria-label="Down"><Chevron d="M1 4l5 4 5-4" /></Tool>
        <Tool $w={30} $ml={8} aria-label="Link">
          <svg width="22" height="10" viewBox="0 0 22 10" fill="none" stroke="#8a8a9e" strokeWidth="2.200">
            <path d="M9 5H6M13 5h3M11 2.500V7.500M10.500 8.300H4.500a3.300 3.300 0 0 1 0-6.600h4M11.500 1.700h6a3.300 3.300 0 0 1 0 6.600h-4" />
          </svg>
        </Tool>
        <Tool $w={28} $ml={38} $bg="#1f1f21" aria-label="Play">
          <svg width="8" height="10" viewBox="0 0 8 10" fill="#6a6a72"><path d="M0 0l8 5-8 5z" /></svg>
        </Tool>
        <Tool $w={23} $bg="#47475a" aria-label="Forward">
          <svg width="19" height="12" viewBox="0 0 19 12" fill={orange}>
            <path d="M0 11C1 6 4 4 7 4V1l6 5-6 5V8C4 8 2 9 0 11z" /><path d="M12 1l6 5-6 5" fill="none" stroke={orange} strokeWidth="1.600" />
          </svg>
        </Tool>
        <Pattern $on>A</Pattern><Pattern>B</Pattern><Pattern>C</Pattern>
        <Tool $w={30} $ml={62} $bg="#47475a" aria-label="Copy" />
        <Spacer />
        <Tool aria-label="Shift left"><Chevron d="M8 1L4 6l4 5" /></Tool>
        <Tool aria-label="Shift right"><Chevron d="M4 1l4 5-4 5" /></Tool>
      </ToolRow>
      <Bars><span /><span /><span /><span /></Bars>
      <Steps>
        {steps.map((v, i) => (
          <div key={i}>
            <Lane>
              <Note style={{ marginTop: noteTop(v) }}>{noteNames[v]}</Note>
            </Lane>
            <StepValue>{v}</StepValue>
          </div>
        ))}
      </Steps>
    </SeqScreen>
  </SeqPanel>
);

const RightColumn = () => (
  <Column>
    <Module $top $h={200}>
      <ModTitle><Grip c="#241803" /></ModTitle>
      <ModCol $pad={5}><Label $h={18}>VOLUME</Label><Knob name="Volume" angle={0} /></ModCol>
      <ModCol $pad={0} $lit><Label $h={18}>ATTACK</Label><Knob name="Amp attack" angle={-135} /></ModCol>
    </Module>
    <Module $top $h={223}>
      <ModTitle><Grip c="#241803" />FILTER</ModTitle>
      <ModField $below={25}><Label>TYPE</Label><BoxButton>ANA LP12</BoxButton></ModField>
      <ModField $below={12}><Label $h={18}>K.TRACK</Label><BoxButton>0.00%</BoxButton></ModField>
      <ModCol $pad={0} $lit><Label $h={18}>ATTACK</Label><Knob name="Filter attack" angle={-135} /></ModCol>
    </Module>
    <Module $top $h={116}>
      <ModTitle><Grip c={amber} />SHAPER</ModTitle>
      <ModCol $pad={7}><BoxButton>SOFT</BoxButton><Knob name="Shape" angle={-135} /></ModCol>
    </Module>
    <Module $h={170} $grow>
      <ModTitle $ml={4} $gap={14}><Grip c={amber} />MOD</ModTitle>
      <ModBody>
        <Stack $gap={6}>
          <SquareButton aria-label="Power"><Power /></SquareButton>
          <SquareButton aria-label="Add modulation"><Plus s={13} w={1.6} /></SquareButton>
        </Stack>
        <ModList>
          <SquareButton aria-label="Mod 1 power"><Power /></SquareButton>
          <SquareButton aria-label="Mod 2 power"><Power /></SquareButton>
          <SquareButton aria-label="Mod 3 power"><Power /></SquareButton>
        </ModList>
      </ModBody>
    </Module>
  </Column>
);

const PerformanceMeter = () => (
  <Perf>
    <PerfHead><CloseDot aria-label="Close" /><span>Performance Meter</span></PerfHead>
    <PerfBody>
      <PerfCol $w={158} $pad={30}>
        <Chart>
          <Scale>{percents.map((s, i) => <span key={i}>{s}</span>)}</Scale>
          <Threads>{Array.from({ length: 12 }, (_, i) => <Thread key={i} $w={5} $load={i === 11} />)}</Threads>
        </Chart>
        <PerfLabel $ml={17}>Processing Threads</PerfLabel>
      </PerfCol>
      <PerfCol $w={130} $pad={29}>
        <Chart>
          <Scale>{percents.map((s, i) => <span key={i}>{s}</span>)}</Scale>
          <Threads><Thread $w={17} /></Threads>
        </Chart>
        <PerfLabel $ml={25}>Drive I/O</PerfLabel>
      </PerfCol>
    </PerfBody>
  </Perf>
);

export default function App() {
  return (
    <>
      <Global />
      <Page>
        <Transport />
        <WindowHead>
          <span />
          <span>Inst 1</span>
          <ToolIcons>
            <svg width="28" height="12" viewBox="0 0 28 12" fill="none" stroke="#2c2c2d">
              <path d="M3 1v9l2-2 2 3 1-1-2-3h3z" fill="#2c2c2d" /><path d="M21 5l3 2 3-2" />
            </svg>
            <svg width="28" height="12" viewBox="0 0 28 12" fill="none" stroke="#2c2c2d">
              <path d="M7 0v12M1 6h12M21 5l3 2 3-2" />
            </svg>
          </ToolIcons>
        </WindowHead>
        <Ruler>{[7, 9, 11, 13, 15, 17, 19, 21, 23, 25].map(n => <RulerMark key={n}>{n}</RulerMark>)}</Ruler>
        <RedoStrip><RedoButton>Redo</RedoButton></RedoStrip>
        <SynthHead>
          <Slot><Arrows /></Slot>
          <HeadButton>MEMORY</HeadButton>
          <HeadButton>UNDO</HeadButton>
          <Info>
            <InfoLines><span>0/32</span><span>OSC: 0</span></InfoLines>
            <InfoLines $end><span>CPU:  2%  </span><span>120.00 BPM</span></InfoLines>
          </Info>
          <Meters><MeterBar /><MeterBar /></Meters>
        </SynthHead>
        <Main>
          <LeftColumn />
          <Column>
            <Oscillator />
            <Sequencer />
          </Column>
          <RightColumn />
        </Main>
        <PerformanceMeter />
        <KnobDefs />
      </Page>
    </>
  );
}
